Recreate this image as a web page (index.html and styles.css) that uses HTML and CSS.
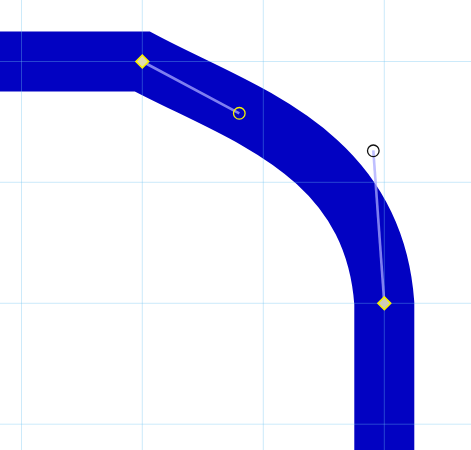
FILE: index.html
```html
<!DOCTYPE html>
<html lang="en">
<head>
<meta charset="utf-8">
<title>Path editor</title>
<link rel="stylesheet" href="styles.css">
</head>
<body>
<main class="canvas">
  <svg class="stage" width="471" height="450" viewBox="0 0 471 450" xmlns="http://www.w3.org/2000/svg">
    <path class="stroke-path" d="M -20 61.5 L 142.3 61.5 C 239.3 113.3, 373.3 150.3, 384.3 303.3 L 384.3 470"/>
    <g class="grid">
      <line x1="21.5" y1="0" x2="21.5" y2="450"/>
      <line x1="142.3" y1="0" x2="142.3" y2="450"/>
      <line x1="263.3" y1="0" x2="263.3" y2="450"/>
      <line x1="384.3" y1="0" x2="384.3" y2="450"/>
      <line x1="0" y1="61.5" x2="471" y2="61.5"/>
      <line x1="0" y1="182.3" x2="471" y2="182.3"/>
      <line x1="0" y1="303.3" x2="471" y2="303.3"/>
      <line x1="0" y1="424.2" x2="471" y2="424.2"/>
    </g>
    <g class="handles">
      <line x1="142.3" y1="61.5" x2="239.3" y2="113.3"/>
      <line x1="384.3" y1="303.3" x2="373.3" y2="150.3"/>
    </g>
    <circle class="ctrl ctrl-on" cx="239.3" cy="113.3" r="5.8"/>
    <circle class="ctrl ctrl-off" cx="373.3" cy="150.8" r="5.8"/>
    <rect class="node" x="137.8" y="57" width="9" height="9" transform="rotate(45 142.3 61.5)"/>
    <rect class="node node-b" x="379.8" y="298.8" width="9" height="9" transform="rotate(45 384.3 303.3)"/>
  </svg>
</main>
</body>
</html>
```
FILE: styles.css
```css
html, body {
  margin: 0;
  padding: 0;
  background: #ffffff;
  overflow: hidden;
}
.canvas {
  width: 471px;
  height: 450px;
  display: block;
}
.stage {
  display: block;
}
.stroke-path {
  fill: none;
  stroke: #0202c2;
  stroke-width: 60;
  stroke-linejoin: miter;
  stroke-miterlimit: 10;
}
.grid line {
  stroke: rgba(110, 195, 240, 0.35);
  stroke-width: 1;
}
.handles line {
  stroke: rgba(170, 170, 255, 0.75);
  stroke-width: 2.6;
}
.ctrl {
  fill: none;
  stroke-width: 1.3;
}
.ctrl-on {
  stroke: #f4f400;
}
.ctrl-off {
  stroke: #111111;
}
.node {
  fill: #e2dcb0;
  stroke: #f6f000;
  stroke-width: 1.6;
}
.node-b {
  fill: #cfcbb8;
}
```
